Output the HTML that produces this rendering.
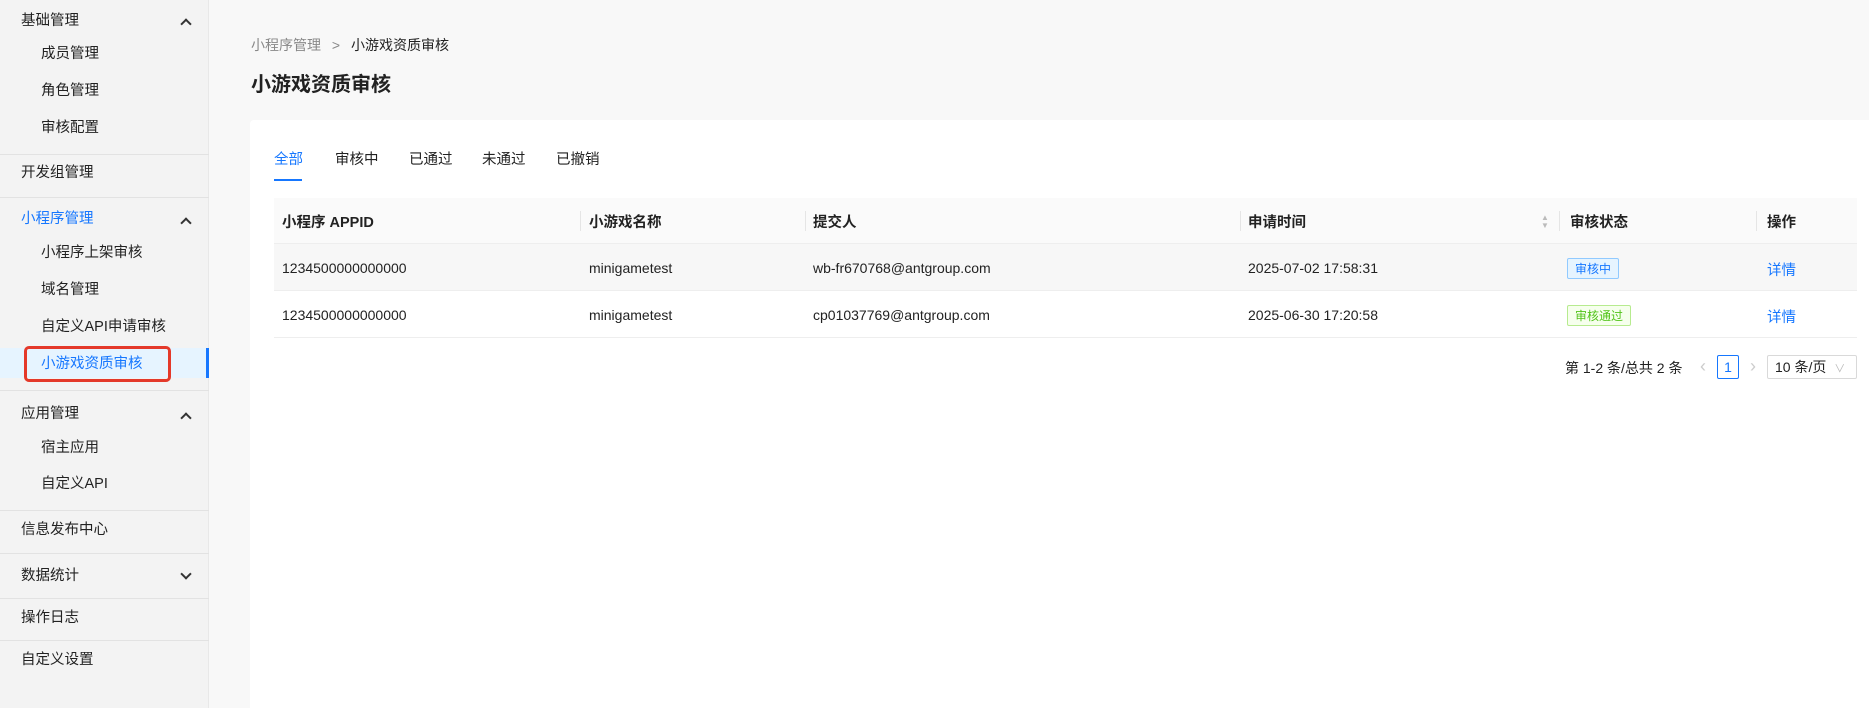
<!DOCTYPE html>
<html><head><meta charset="utf-8"><style>
*{margin:0;padding:0;box-sizing:border-box}
body{width:1869px;height:708px;overflow:hidden;background:#f8f8f8;font-family:"Liberation Sans","Noto Sans CJK SC",sans-serif;color:#222;position:relative}
.sb{position:absolute;left:0;top:0;width:209px;height:708px;background:#f3f3f3;border-right:1px solid #e8e8e8}
.t{position:absolute;font-size:14.5px;line-height:20px;white-space:nowrap}
.div{position:absolute;left:0;width:209px;height:1px;background:#e2e2e2}
.chev{position:absolute;left:182px;width:8px;height:8px;border-left:2px solid #333;border-top:2px solid #333}
.up{transform:rotate(45deg)}
.dn{transform:rotate(-135deg)}
.card{position:absolute;left:250px;top:120px;right:0;bottom:0;background:#fff;border-radius:4px 0 0 0}
.th{position:absolute;font-size:14.5px;font-weight:bold;color:#222;top:211px}
.td{position:absolute;font-size:14px;color:#222;white-space:nowrap}
.sep{position:absolute;top:211px;width:1px;height:20px;background:#e5e5e5}
.link{color:#1677ff}
</style></head><body>
<div class="sb">
<div class="t" style="left:21px;top:11px">基础管理</div><div class="chev up" style="top:20px"></div>
<div class="t" style="left:41px;top:44px">成员管理</div>
<div class="t" style="left:41px;top:81px">角色管理</div>
<div class="t" style="left:41px;top:118px">审核配置</div>
<div class="div" style="top:154px"></div>
<div class="t" style="left:21px;top:163px">开发组管理</div>
<div class="div" style="top:197px"></div>
<div class="t" style="left:21px;top:209px;color:#1677ff">小程序管理</div><div class="chev up" style="top:219px"></div>
<div class="t" style="left:41px;top:243px">小程序上架审核</div>
<div class="t" style="left:41px;top:280px">域名管理</div>
<div class="t" style="left:41px;top:317px">自定义API申请审核</div>
<div style="position:absolute;left:0;top:348px;width:209px;height:30px;background:#e6f4ff;border-right:3px solid #1677ff"></div>
<div style="position:absolute;left:24px;top:346px;width:147px;height:36px;border:3px solid #e4392a;border-radius:5px"></div>
<div class="t" style="left:41px;top:354px;color:#1677ff">小游戏资质审核</div>
<div class="div" style="top:390px"></div>
<div class="t" style="left:21px;top:404px">应用管理</div><div class="chev up" style="top:414px"></div>
<div class="t" style="left:41px;top:438px">宿主应用</div>
<div class="t" style="left:41px;top:474px">自定义API</div>
<div class="div" style="top:510px"></div>
<div class="t" style="left:21px;top:520px">信息发布中心</div>
<div class="div" style="top:553px"></div>
<div class="t" style="left:21px;top:566px">数据统计</div><div class="chev dn" style="top:570px"></div>
<div class="div" style="top:598px"></div>
<div class="t" style="left:21px;top:608px">操作日志</div>
<div class="div" style="top:640px"></div>
<div class="t" style="left:21px;top:650px">自定义设置</div>
</div>
<div class="t" style="left:251px;top:35px;font-size:14px;color:#888">小程序管理 <span style="margin:0 7px">&gt;</span> <span style="color:#222">小游戏资质审核</span></div>
<div class="t" style="left:251px;top:73px;font-size:20px;line-height:24px;font-weight:bold">小游戏资质审核</div>
<div class="card"></div>
<div class="t" style="left:274px;top:150px;color:#1677ff">全部</div>
<div style="position:absolute;left:274px;top:179px;width:28px;height:2px;background:#1677ff"></div>
<div class="t" style="left:335px;top:150px">审核中</div>
<div class="t" style="left:409px;top:150px">已通过</div>
<div class="t" style="left:482px;top:150px">未通过</div>
<div class="t" style="left:556px;top:150px">已撤销</div>
<div style="position:absolute;left:274px;top:198px;width:1583px;height:46px;background:#fafafa;border-bottom:1px solid #eee"></div>
<div style="position:absolute;left:274px;top:244px;width:1583px;height:47px;background:#f7f7f7;border-bottom:1px solid #eee"></div>
<div style="position:absolute;left:274px;top:291px;width:1583px;height:47px;border-bottom:1px solid #eee"></div>
<div class="th" style="left:282px">小程序 APPID</div>
<div class="th" style="left:589px">小游戏名称</div>
<div class="th" style="left:813px">提交人</div>
<div class="th" style="left:1248px">申请时间</div>
<div class="th" style="left:1570px">审核状态</div>
<div class="th" style="left:1767px">操作</div>
<div class="sep" style="left:580px"></div><div class="sep" style="left:805px"></div><div class="sep" style="left:1240px"></div><div class="sep" style="left:1559px"></div><div class="sep" style="left:1756px"></div>
<div style="position:absolute;left:1541px;top:214px;font-size:8px;line-height:8px;color:#bbb">▲<br>▼</div>
<div class="td" style="left:282px;top:260px">1234500000000000</div>
<div class="td" style="left:589px;top:260px">minigametest</div>
<div class="td" style="left:813px;top:260px">wb-fr670768@antgroup.com</div>
<div class="td" style="left:1248px;top:260px">2025-07-02 17:58:31</div>
<div class="td" style="left:1567px;top:258px;font-size:12px;color:#1677ff;background:#e6f4ff;border:1px solid #91caff;border-radius:2px;padding:1px 7px">审核中</div>
<div class="td link" style="left:1767px;top:259px;font-size:14.5px">详情</div>
<div class="td" style="left:282px;top:307px">1234500000000000</div>
<div class="td" style="left:589px;top:307px">minigametest</div>
<div class="td" style="left:813px;top:307px">cp01037769@antgroup.com</div>
<div class="td" style="left:1248px;top:307px">2025-06-30 17:20:58</div>
<div class="td" style="left:1567px;top:305px;font-size:12px;color:#52c41a;background:#f6ffed;border:1px solid #b7eb8f;border-radius:2px;padding:1px 7px">审核通过</div>
<div class="td link" style="left:1767px;top:306px;font-size:14.5px">详情</div>
<div class="td" style="left:1565px;top:358px;font-size:14px">第 1-2 条/总共 2 条</div>
<div class="td" style="left:1700px;top:356px;color:#ccc;font-size:18px">‹</div>
<div style="position:absolute;left:1717px;top:355px;width:22px;height:24px;border:1px solid #1677ff;border-radius:2px;color:#1677ff;font-size:14px;text-align:center;line-height:22px">1</div>
<div class="td" style="left:1750px;top:356px;color:#ccc;font-size:18px">›</div>
<div style="position:absolute;left:1767px;top:355px;width:90px;height:24px;border:1px solid #d9d9d9;border-radius:2px;font-size:14px;line-height:22px;padding-left:7px">10 条/页 <span style="color:#bbb;font-size:11px;margin-left:4px">∨</span></div>
</body></html>
